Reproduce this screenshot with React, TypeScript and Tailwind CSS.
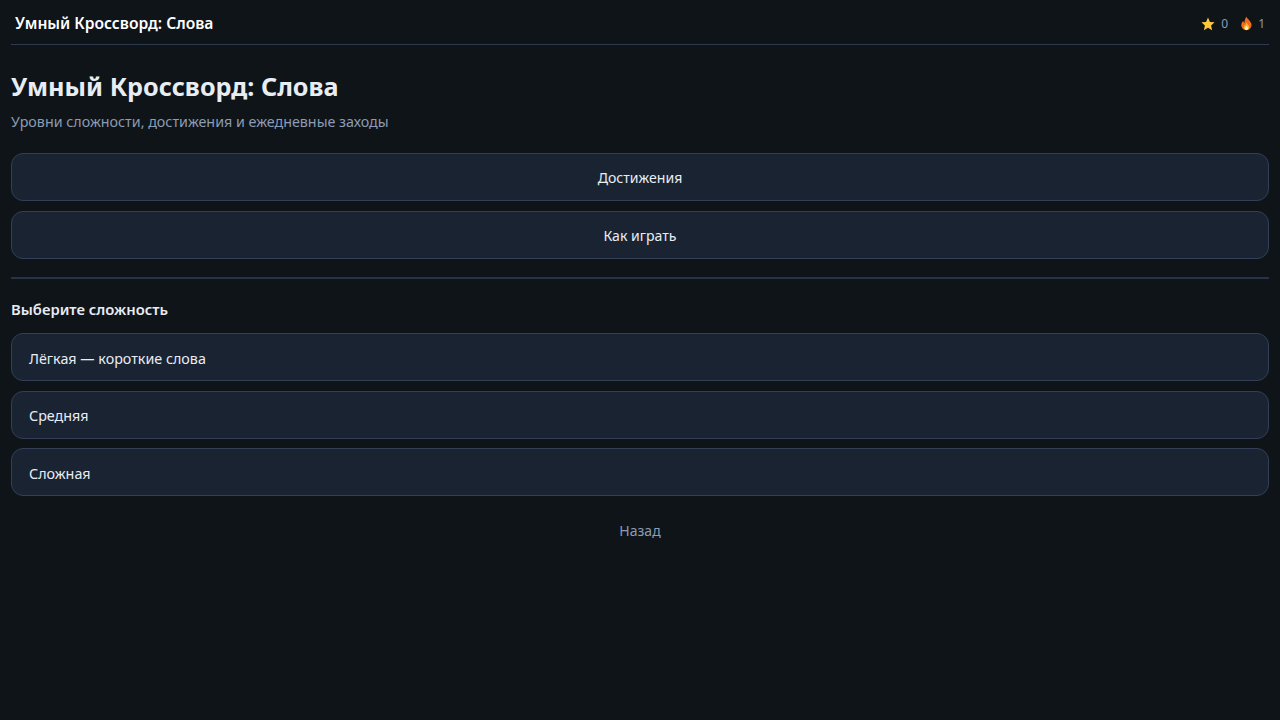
const font = { fontFamily: '"Noto Sans", "Open Sans", sans-serif' };

function Star() {
  return (
    <svg width="14" height="14" viewBox="0 0 24 24" className="shrink-0">
      <path d="M12 1l3.300 7.400 8 .8-6 5.400 1.700 7.900L12 18.500l-7 4 1.700-7.900-6-5.400 8-.8z" fill="#fdc83a" />
    </svg>
  );
}

function Flame() {
  return (
    <svg width="13" height="15" viewBox="0 0 24 26" className="shrink-0">
      <path d="M12 .5c1 4 7.500 7 9 13C22.500 20 17.500 25.500 12 25.500S1.500 20.500 2.500 14.500c.5-3 2-5 3.500-6.500.3 2 1 3 2.500 3.500C8 8 9.500 3.500 12 .5z" fill="#f26a1b" />
      <path d="M12 10.500c.5 3 5 5 5 9 0 3.200-2.200 5.500-5 5.500s-5-2.300-5-5.300c0-2.200 1.300-3.500 2.400-4.500.2 1 .6 1.500 1.300 1.800-.2-2.300 0-4.500 1.300-6.500z" fill="#ffb62e" />
      <path d="M12 17c.5 1.500 2.800 2.500 2.800 4.800 0 1.800-1.200 3.200-2.800 3.200s-2.800-1.400-2.800-3.200c0-2 2-3 2.800-4.800z" fill="#fff3c4" />
    </svg>
  );
}

function ActionButton({ label }: { label: string }) {
  return (
    <button className="h-12 w-full rounded-xl border border-[#323f57] bg-[#1a2332] pt-[2px] text-center text-[14.1px] text-[#e8edf4]">
      {label}
    </button>
  );
}

function LevelButton({ label }: { label: string }) {
  return (
    <button className="h-12 w-full rounded-xl border border-[#323f57] bg-[#1a2332] px-[17px] pt-[3px] text-left text-[14.3px] text-[#e8edf4]">
      {label}
    </button>
  );
}

export default function App() {
  return (
    <div style={font} className="min-h-screen bg-[#0f1419] px-[11px] text-[#e8edf4]">
      {/* Шапка */}
      <header className="flex h-[45px] items-center justify-between border-b border-[#2d3a4f] pl-1 pr-1">
        <div className="pt-[4px] text-[15.6px] font-semibold text-white">Умный Кроссворд: Слова</div>
        <div className="flex items-center pt-[3px] text-xs text-[#8b9cb3]">
          <Star />
          <span className="ml-[6px]">0</span>
          <span className="ml-3"><Flame /></span>
          <span className="ml-[5px]">1</span>
        </div>
      </header>

      <h1 className="mt-[24px] text-[25.2px] font-bold leading-[34px]">Умный Кроссворд: Слова</h1>
      <p className="mt-[9px] text-[14.3px] leading-5 text-[#8b9cb3]">Уровни сложности, достижения и ежедневные заходы</p>

      <div className="mt-[21px] flex flex-col gap-[10px]">
        <ActionButton label="Достижения" />
        <ActionButton label="Как играть" />
      </div>

      <hr className="mt-[18px] h-[2px] border-0 bg-[#283348]" />

      <h2 className="mt-[20px] text-[14.8px] font-semibold leading-5">Выберите сложность</h2>

      <div className="mt-[14px] flex flex-col gap-[9.5px]">
        <LevelButton label="Лёгкая — короткие слова" />
        <LevelButton label="Средняя" />
        <LevelButton label="Сложная" />
      </div>

      <div className="mt-[25px] text-center text-sm leading-5 text-[#8b9cb3]">Назад</div>
    </div>
  );
}
